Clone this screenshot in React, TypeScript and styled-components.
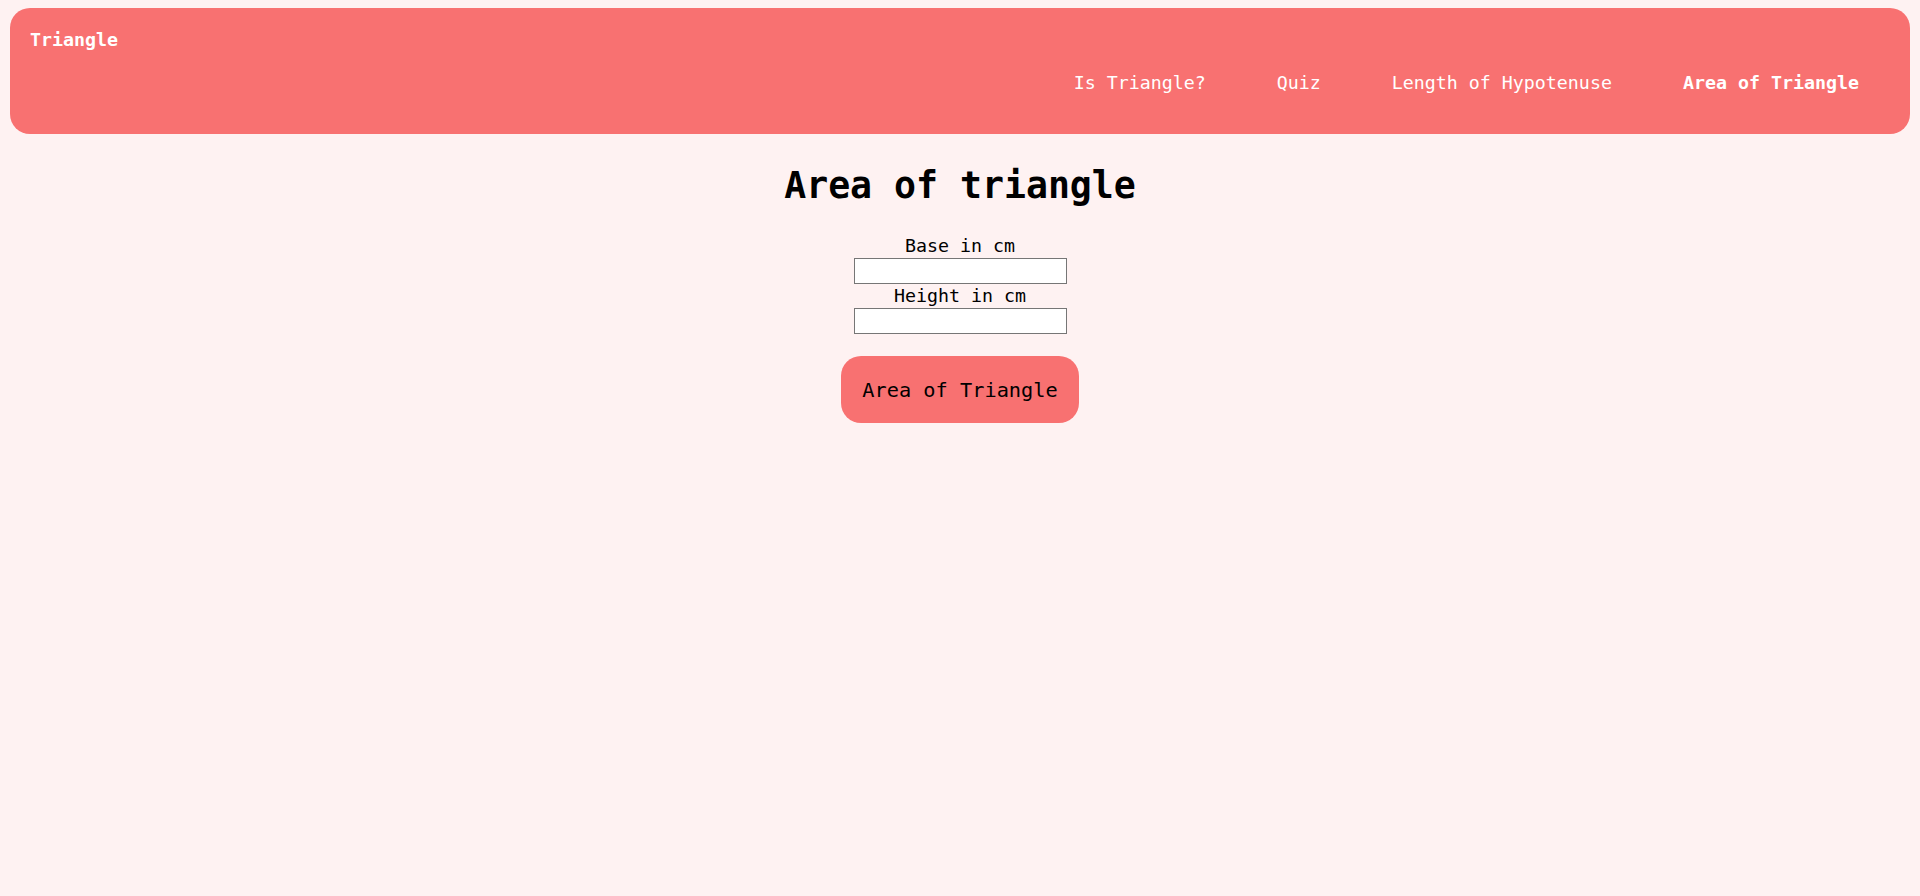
import React from "react";
import styled, { createGlobalStyle } from "styled-components";

const GlobalStyle = createGlobalStyle`
  html, body {
    margin: 0;
    padding: 0;
    background: #fef2f2;
  }
  body {
    padding: 8px 10px;
    font-family: "DejaVu Sans Mono", "Liberation Mono", monospace;
    color: #000;
  }
`;

const NavBar = styled.nav`
  background: #f87171;
  border-radius: 20px;
  height: 126px;
  box-sizing: border-box;
  padding: 21px 51px 0 20px;
  display: flex;
  flex-direction: column;
  gap: 21px;
`;

const Brand = styled.div`
  color: #fff;
  font-weight: 700;
  font-size: 18.3px;
  line-height: 22px;
`;

const Links = styled.ul`
  list-style: none;
  margin: 0;
  padding: 0;
  display: flex;
  justify-content: flex-end;
  gap: 71px;
`;

const LinkItem = styled.li<{ $active?: boolean }>`
  color: #fff;
  font-size: 18.3px;
  line-height: 22px;
  font-weight: ${(p) => (p.$active ? 700 : 400)};
  cursor: pointer;
`;

const Main = styled.main`
  display: flex;
  flex-direction: column;
  align-items: center;
`;

const Title = styled.h1`
  font-size: 36.5px;
  line-height: 44px;
  font-weight: 700;
  margin: 30px 0 26px;
`;

const Label = styled.label`
  font-size: 18.3px;
  line-height: 24px;
  display: block;
  text-align: center;
`;

const Input = styled.input`
  width: 213px;
  height: 26px;
  box-sizing: border-box;
  border: 1px solid #767676;
  background: #fff;
  margin: 0;
  padding: 0 2px;
`;

const Button = styled.button`
  margin-top: 22px;
  width: 238px;
  height: 67px;
  background: #f87171;
  border: none;
  border-radius: 20px;
  font-family: "DejaVu Sans Mono", "Liberation Mono", monospace;
  font-size: 20.3px;
  color: #000;
  cursor: pointer;
`;

export default function App() {
  return (
    <>
      <GlobalStyle />
      <NavBar>
        <Brand>Triangle</Brand>
        <Links>
          <LinkItem>Is Triangle?</LinkItem>
          <LinkItem>Quiz</LinkItem>
          <LinkItem>Length of Hypotenuse</LinkItem>
          <LinkItem $active>Area of Triangle</LinkItem>
        </Links>
      </NavBar>
      <Main>
        <Title>Area of triangle</Title>
        <Label htmlFor="base">Base in cm</Label>
        <Input id="base" type="number" />
        <Label htmlFor="height">Height in cm</Label>
        <Input id="height" type="number" />
        <Button>Area of Triangle</Button>
      </Main>
    </>
  );
}
